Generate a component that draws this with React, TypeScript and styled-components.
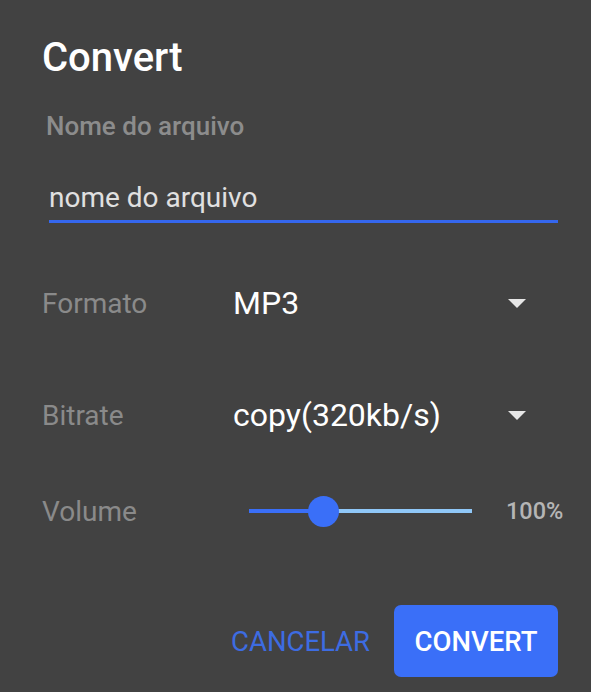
import React from "react";
import styled, { createGlobalStyle } from "styled-components";

const Global = createGlobalStyle`
  html, body { margin: 0; padding: 0; background: #424242; }
  body { font-family: Roboto, "Noto Sans", sans-serif; }
`;

const Dialog = styled.div`
  width: 591px;
  height: 692px;
  box-sizing: border-box;
  background: #424242;
  padding: 35px 33px 0 42px;
  display: flex;
  flex-direction: column;
`;

const Title = styled.h2`
  margin: 0;
  font-size: 40px;
  font-weight: 500;
  color: #ffffff;
  line-height: 46px;
`;

const FieldLabel = styled.div`
  margin: 29px 0 0 4px;
  font-size: 26px;
  font-weight: 500;
  color: #8c8c8c;
  line-height: 32px;
`;

const TextInput = styled.input`
  margin: 38px 0 0 7px;
  width: calc(100% - 7px);
  box-sizing: border-box;
  background: transparent;
  border: none;
  border-bottom: 3px solid #3567ee;
  outline: none;
  font-family: Roboto, sans-serif;
  font-size: 28px;
  color: #e0e0e0;
  padding: 0 0 6px 0;
  line-height: 34px;
  height: 43px;
`;

const Row = styled.div<{ $top: number }>`
  display: flex;
  align-items: center;
  margin-top: ${(p) => p.$top}px;
  height: 44px;
`;

const RowLabel = styled.div`
  width: 191px;
  flex-shrink: 0;
  font-size: 28px;
  color: #8a8a8a;
`;

const Select = styled.div`
  flex: 1;
  display: flex;
  align-items: center;
  justify-content: space-between;
  padding-right: 32px;
  font-size: 32px;
  color: #ffffff;
`;

const Arrow = styled.div`
  width: 0;
  height: 0;
  border-left: 9.5px solid transparent;
  border-right: 9.5px solid transparent;
  border-top: 9.5px solid #e6e6e6;
`;

const SliderBox = styled.div`
  position: relative;
  flex-shrink: 0;
  width: 223px;
  height: 32px;
  margin-left: 16px;
  display: flex;
  align-items: center;
`;

const Track = styled.div<{ $color: string }>`
  height: 4px;
  background: ${(p) => p.$color};
`;

const Thumb = styled.div`
  position: absolute;
  top: 1px;
  width: 31px;
  height: 31px;
  margin-left: -15.5px;
  border-radius: 50%;
  background: #3a6ff8;
`;

const Value = styled.div`
  flex-shrink: 0;
  margin-left: 34px;
  font-size: 23.5px;
  font-weight: 500;
  color: #b5b5b5;
`;

const Actions = styled.div`
  margin-top: 72px;
  display: flex;
  justify-content: flex-end;
  align-items: center;
  gap: 24px;
`;

const TextButton = styled.button`
  background: none;
  border: none;
  padding: 0;
  font-family: Roboto, sans-serif;
  font-size: 27.5px;
  color: #3d6ce2;
`;

const PrimaryButton = styled.button`
  width: 164px;
  height: 72px;
  border: none;
  border-radius: 7px;
  background: #3a6ff8;
  color: #ffffff;
  font-family: Roboto, sans-serif;
  font-weight: 500;
  font-size: 27.5px;
`;

export default function App() {
  const pct = 33.5;
  return (
    <>
      <Global />
      <Dialog>
        <Title>Convert</Title>
        <FieldLabel>Nome do arquivo</FieldLabel>
        <TextInput defaultValue="nome do arquivo" />
        <Row $top={58}>
          <RowLabel>Formato</RowLabel>
          <Select>
            <span>MP3</span>
            <Arrow />
          </Select>
        </Row>
        <Row $top={68}>
          <RowLabel>Bitrate</RowLabel>
          <Select>
            <span>copy(320kb/s)</span>
            <Arrow />
          </Select>
        </Row>
        <Row $top={52}>
          <RowLabel>Volume</RowLabel>
          <SliderBox>
            <Track $color="#3a6ff8" style={{ width: `${pct}%` }} />
            <Track $color="#90c8f8" style={{ flex: 1 }} />
            <Thumb style={{ left: `${pct}%` }} />
          </SliderBox>
          <Value>100%</Value>
        </Row>
        <Actions>
          <TextButton>CANCELAR</TextButton>
          <PrimaryButton>CONVERT</PrimaryButton>
        </Actions>
      </Dialog>
    </>
  );
}
